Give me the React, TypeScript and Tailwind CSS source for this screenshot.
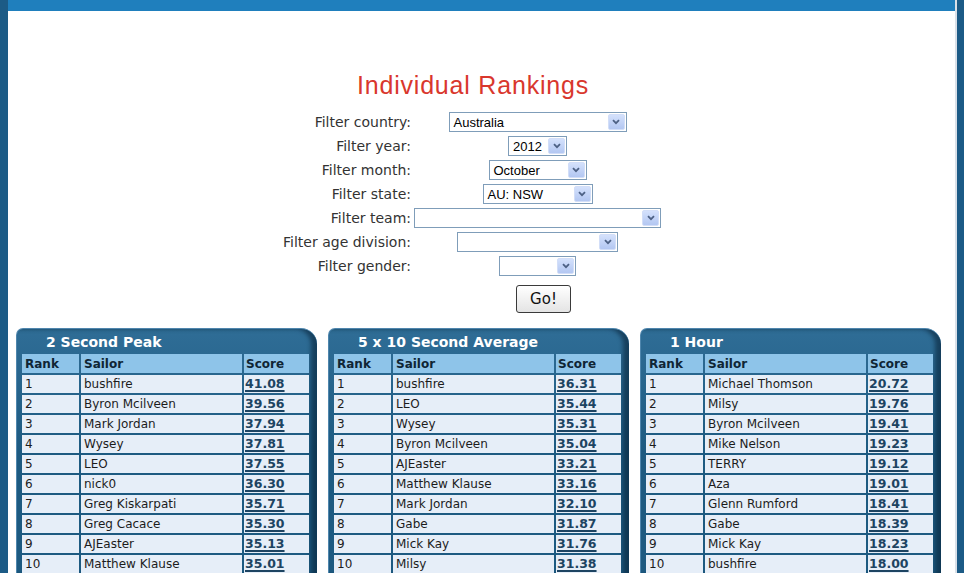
import React from "react"

type Row = [string, string, string]

const panels: { title: string; rows: Row[] }[] = [
  {
    title: "2 Second Peak",
    rows: [
      ["1", "bushfire", "41.08"],
      ["2", "Byron Mcilveen", "39.56"],
      ["3", "Mark Jordan", "37.94"],
      ["4", "Wysey", "37.81"],
      ["5", "LEO", "37.55"],
      ["6", "nick0", "36.30"],
      ["7", "Greg Kiskarpati", "35.71"],
      ["8", "Greg Cacace", "35.30"],
      ["9", "AJEaster", "35.13"],
      ["10", "Matthew Klause", "35.01"],
    ],
  },
  {
    title: "5 x 10 Second Average",
    rows: [
      ["1", "bushfire", "36.31"],
      ["2", "LEO", "35.44"],
      ["3", "Wysey", "35.31"],
      ["4", "Byron Mcilveen", "35.04"],
      ["5", "AJEaster", "33.21"],
      ["6", "Matthew Klause", "33.16"],
      ["7", "Mark Jordan", "32.10"],
      ["8", "Gabe", "31.87"],
      ["9", "Mick Kay", "31.76"],
      ["10", "Milsy", "31.38"],
    ],
  },
  {
    title: "1 Hour",
    rows: [
      ["1", "Michael Thomson", "20.72"],
      ["2", "Milsy", "19.76"],
      ["3", "Byron Mcilveen", "19.41"],
      ["4", "Mike Nelson", "19.23"],
      ["5", "TERRY", "19.12"],
      ["6", "Aza", "19.01"],
      ["7", "Glenn Rumford", "18.41"],
      ["8", "Gabe", "18.39"],
      ["9", "Mick Kay", "18.23"],
      ["10", "bushfire", "18.00"],
    ],
  },
]

function FakeSelect({ width, value }: { width: string; value?: string }) {
  return (
    <div className={`${width} flex h-[20px] items-center border border-[#7f9db9] bg-white`}>
      <span className="flex-1 truncate pl-[4px] font-['Liberation_Sans',Arial,sans-serif] text-[13px] leading-none text-black">
        {value}
      </span>
      <span className="mr-[1px] flex h-[16px] w-[17px] items-center justify-center rounded-[2px] border border-[#d2def8] bg-gradient-to-b from-[#d4e1fc] to-[#b3c7f2]">
        <svg width="8" height="6" viewBox="0 0 8 6">
          <path d="M1 1.2 L4 4.2 L7 1.2" fill="none" stroke="#4d6185" strokeWidth="1.8" />
        </svg>
      </span>
    </div>
  )
}

const filters: { label: string; width: string; value?: string }[] = [
  { label: "Filter country:", width: "w-[178px]", value: "Australia" },
  { label: "Filter year:", width: "w-[59px]", value: "2012" },
  { label: "Filter month:", width: "w-[98px]", value: "October" },
  { label: "Filter state:", width: "w-[110px]", value: "AU: NSW" },
  { label: "Filter team:", width: "w-[247px]" },
  { label: "Filter age division:", width: "w-[161px]" },
  { label: "Filter gender:", width: "w-[77px]" },
]

function Panel({ title, rows }: { title: string; rows: Row[] }) {
  return (
    <div className="w-[301px] rounded-tl-[7px] rounded-tr-[16px] border-l border-t border-[#4f86ad] bg-gradient-to-b from-[#2f6d96] via-[#1d5a81] to-[#1d5a81] pl-[3px] pr-[6px] shadow-[inset_-6px_0_4px_rgba(5,30,50,0.55)]">
      <div className="h-[23px] pl-[26px] pt-[5px] text-[14px] font-bold leading-[17px] text-white">
        {title}
      </div>
      <table className="w-[291px] table-fixed border-separate border-spacing-[2px] text-[12px] leading-none">
        <colgroup>
          <col className="w-[57px]" />
          <col className="w-[161px]" />
          <col className="w-[65px]" />
        </colgroup>
        <thead>
          <tr className="h-[19px] bg-[#8ec4e9] text-left font-bold text-[#0f2535]">
            <th className="pl-[3px]">Rank</th>
            <th className="pl-[3px]">Sailor</th>
            <th className="pl-[2px]">Score</th>
          </tr>
        </thead>
        <tbody>
          {rows.map(([rank, sailor, score]) => (
            <tr key={rank} className="h-[18px] bg-[#e6eef8] text-[#1c1c1c]">
              <td className="pl-[3px]">{rank}</td>
              <td className="pl-[3px] whitespace-nowrap">{sailor}</td>
              <td className="pl-[1px]">
                <a href="#" className="text-[12.5px] font-bold text-[#1d4462] underline decoration-[1.5px] underline-offset-[2px]">
                  {score}
                </a>
              </td>
            </tr>
          ))}
        </tbody>
      </table>
    </div>
  )
}

export default function App() {
  return (
    <div className="flex h-[573px] w-[964px] overflow-hidden bg-[#1c5b86] pl-[8px] pr-[7px] font-['DejaVu_Sans',Verdana,sans-serif]">
      <div className="flex-1 border-r-2 border-[#d9e0e8] bg-white">
        <div className="h-[11px] bg-[#1f7fbd]" />

        <div className="flex flex-col items-center pr-[17px] pt-[60px]">
          <h1 className="h-[29px] font-['Liberation_Sans',Arial,sans-serif] text-[25px] leading-[29px] tracking-[0.8px] text-[#d9372d]">
            Individual Rankings
          </h1>

          <div className="mt-[10px] grid grid-cols-[126px_247px] gap-x-[3px]">
            {filters.map((f) => (
              <React.Fragment key={f.label}>
                <div className="flex h-[24px] items-center justify-end whitespace-nowrap text-[14px] text-[#333]">
                  {f.label}
                </div>
                <div className="flex h-[24px] items-center justify-center">
                  <FakeSelect width={f.width} value={f.value} />
                </div>
              </React.Fragment>
            ))}
            <div />
            <div className="mt-[7px] flex justify-center pl-[12px]">
              <button className="h-[28px] w-[55px] rounded-[3px] border border-[#3a3a3a] bg-gradient-to-b from-white to-[#e4e4e4] text-[15px] text-[#111]">
                Go!
              </button>
            </div>
          </div>
        </div>

        <div className="mt-[15px] flex gap-[11px] pl-[8px]">
          {panels.map((p) => (
            <Panel key={p.title} title={p.title} rows={p.rows} />
          ))}
        </div>
      </div>
    </div>
  )
}
